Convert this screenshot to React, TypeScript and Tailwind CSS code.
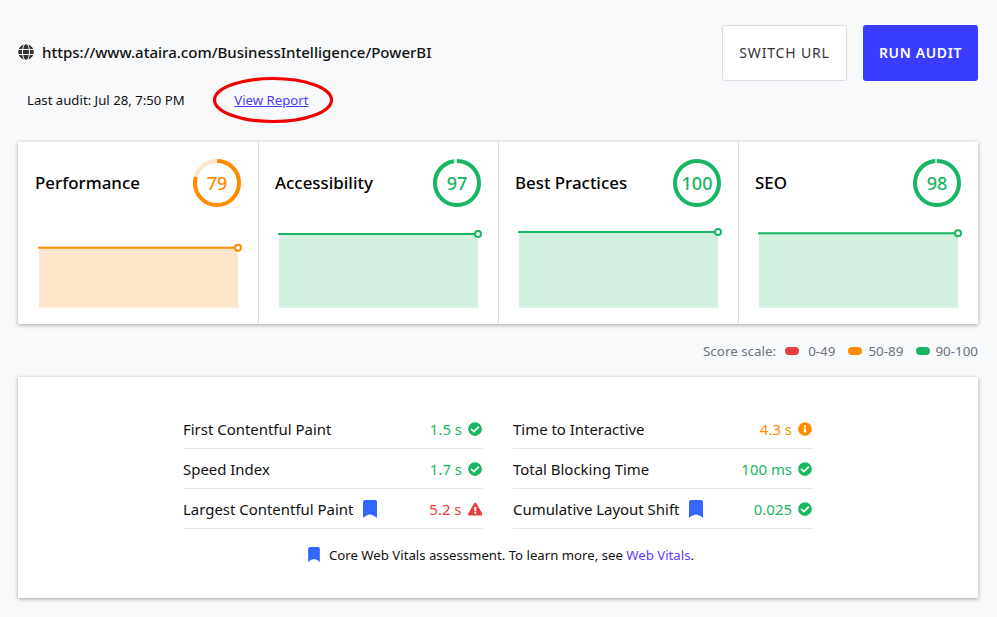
import { FaCheckCircle, FaExclamationTriangle, FaGlobe, FaInfoCircle } from 'react-icons/fa';

const ORANGE = '#ff8c00';
const GREEN = '#18b663';

const scores = [
  { title: 'Performance', score: 79, color: ORANGE, track: '#fde6cc', fill: '#fee6cc', y: 22.7 },
  { title: 'Accessibility', score: 97, color: GREEN, track: '#d1f0e0', fill: '#d1f0e0', y: 9 },
  { title: 'Best Practices', score: 100, color: GREEN, track: '#d1f0e0', fill: '#d1f0e0', y: 7 },
  { title: 'SEO', score: 98, color: GREEN, track: '#d1f0e0', fill: '#d1f0e0', y: 8.3 },
];

const Ring = ({ score, color, track }: { score: number; color: string; track: string }) => {
  const c = 2 * Math.PI * 22;
  return (
    <div className="relative w-12 h-12 flex items-center justify-center">
      <svg width="48" height="48" viewBox="0 0 48 48" className="absolute inset-0 -rotate-90">
        <circle cx="24" cy="24" r="22" fill="none" stroke={track} strokeWidth="4" />
        <circle cx="24" cy="24" r="22" fill="none" stroke={color} strokeWidth="4" strokeDasharray={`${(c * score) / 100} ${c}`} />
      </svg>
      <span className="text-[18px] font-medium leading-none" style={{ color }}>{score}</span>
    </div>
  );
};

const Trend = ({ y, color, fill }: { y: number; color: string; fill: string }) => (
  <svg width="208" height="90" viewBox="0 0 208 90" className="block">
    <rect x="1" y={y} width="199" height={82.7 - y} fill={fill} />
    <line x1="0" y1={y} x2="200" y2={y} stroke={color} strokeWidth="2" />
    <circle cx="200" cy={y} r="3" fill="#fff" stroke={color} strokeWidth="2" />
  </svg>
);

const BookmarkIcon = ({ className }: { className: string }) => (
  <svg viewBox="0 0 14 18" className={className} fill="currentColor">
    <path d="M2 0H12a2 2 0 0 1 2 2V18Q10 14.5 7 14.5T0 18V2a2 2 0 0 1 2-2Z" />
  </svg>
);

const Status = ({ kind }: { kind: 'pass' | 'info' | 'fail' }) => {
  if (kind === 'info') return <FaInfoCircle className="text-[#ff8c00] w-[14px] h-[14px]" />;
  if (kind === 'fail') return <FaExclamationTriangle className="text-[#e53e3e] w-[14.5px] h-[14px]" />;
  return <FaCheckCircle className="text-[#18b663] w-[14px] h-[14px]" />;
};

const Metric = ({
  label,
  value,
  kind,
  vital,
}: {
  label: string;
  value: string;
  kind: 'pass' | 'info' | 'fail';
  vital?: boolean;
}) => {
  const tone = kind === 'pass' ? 'text-[#18b663]' : kind === 'info' ? 'text-[#ff8c00]' : 'text-[#e53e3e]';
  return (
    <div className="h-10 pt-[2px] flex items-center justify-between border-b border-[#e5e7eb] text-[14.95px]">
      <div className="flex items-center gap-[10px] text-[#111]">
        <span>{label}</span>
        {vital && <BookmarkIcon className="text-[#3366ff] w-[14px] h-[18px]" />}
      </div>
      <div className="flex items-center gap-[6px] pr-px">
        <span className={tone}>{value}</span>
        <Status kind={kind} />
      </div>
    </div>
  );
};

const App = () => {
  return (
    <div className="w-[997px] h-[617px] overflow-hidden bg-[#f8f9fb] pt-[25px] pl-[18px] pr-[19px] font-['Noto_Sans',sans-serif] text-[#111]">
      <div className="flex justify-between">
        <div className="flex items-center gap-2 h-14 text-[15.04px] font-medium">
          <FaGlobe className="w-4 h-4 text-[#333] mb-[2px]" />
          <span className="mb-px">https://www.ataira.com/BusinessIntelligence/PowerBI</span>
        </div>
        <div className="flex gap-4">
          <button className="w-[125px] h-14 pb-[2px] bg-white border border-[#dcdee3] rounded-[3px] text-[14px] tracking-[0.06em] text-[#333]">
            SWITCH URL
          </button>
          <button className="w-[115px] h-14 pb-[2px] bg-[#3a3dff] rounded-[3px] text-[14px] font-semibold tracking-[0.045em] text-white">
            RUN AUDIT
          </button>
        </div>
      </div>

      <div className="relative flex items-center h-5 mt-[10px] pl-[9px] text-[13.2px]">
        <span>Last audit: Jul 28, 7:50 PM</span>
        <a href="#" className="ml-[49.5px] text-[#4a3dff] underline">View Report</a>
        <svg width="122" height="48" viewBox="0 0 122 48" className="absolute left-[194px] -top-[15px]">
          <ellipse cx="61" cy="24" rx="58.5" ry="21.5" fill="none" stroke="#f00000" strokeWidth="3.2" />
        </svg>
      </div>

      <div className="mt-[31px] h-[182px] grid grid-cols-4 bg-white shadow-[0_1px_4px_rgba(0,0,0,0.35)]">
        {scores.map((s, i) => (
          <div key={s.title} className={`pt-[17px] ${i > 0 ? 'shadow-[inset_1px_0_0_#d8d9dc]' : ''}`}>
            <div className="flex items-center justify-between px-[17px]">
              <span className="text-[16.9px] font-medium text-black">{s.title}</span>
              <Ring score={s.score} color={s.color} track={s.track} />
            </div>
            <div className="mt-[18px] pl-[20px]">
              <Trend y={s.y} color={s.color} fill={s.fill} />
            </div>
          </div>
        ))}
      </div>

      <div className="h-[53px] pt-[2px] flex items-center justify-end gap-[13px] text-[13.4px] text-[#6b7280]">
        <span className="mr-[-4px]">Score scale:</span>
        <div className="flex items-center gap-[9px]">
          <span className="w-[14px] h-2 rounded-full bg-[#e53e3e]" />
          <span>0-49</span>
        </div>
        <div className="flex items-center gap-[6px]">
          <span className="w-[14px] h-2 rounded-full bg-[#ff8c00]" />
          <span>50-89</span>
        </div>
        <div className="flex items-center gap-[5px]">
          <span className="w-[14px] h-2 rounded-full bg-[#18b663]" />
          <span>90-100</span>
        </div>
      </div>

      <div className="h-[221px] bg-white shadow-[0_1px_4px_rgba(0,0,0,0.35)] pt-[32px]">
        <div className="w-[630px] mx-auto grid grid-cols-2 gap-x-[30px]">
          <Metric label="First Contentful Paint" value="1.5 s" kind="pass" />
          <Metric label="Time to Interactive" value="4.3 s" kind="info" />
          <Metric label="Speed Index" value="1.7 s" kind="pass" />
          <Metric label="Total Blocking Time" value="100 ms" kind="pass" />
          <Metric label="Largest Contentful Paint" value="5.2 s" kind="fail" vital />
          <Metric label="Cumulative Layout Shift" value="0.025" kind="pass" vital />
        </div>
        <div className="mt-[17px] ml-[6px] flex items-center justify-center gap-[9px] text-[13.2px]">
          <BookmarkIcon className="text-[#3366ff] w-3 h-[15px] mb-[3px]" />
          <span>
            Core Web Vitals assessment. To learn more, see <a href="#" className="text-[#5a3dff]">Web Vitals</a>.
          </span>
        </div>
      </div>
    </div>
  );
};

export default App;
